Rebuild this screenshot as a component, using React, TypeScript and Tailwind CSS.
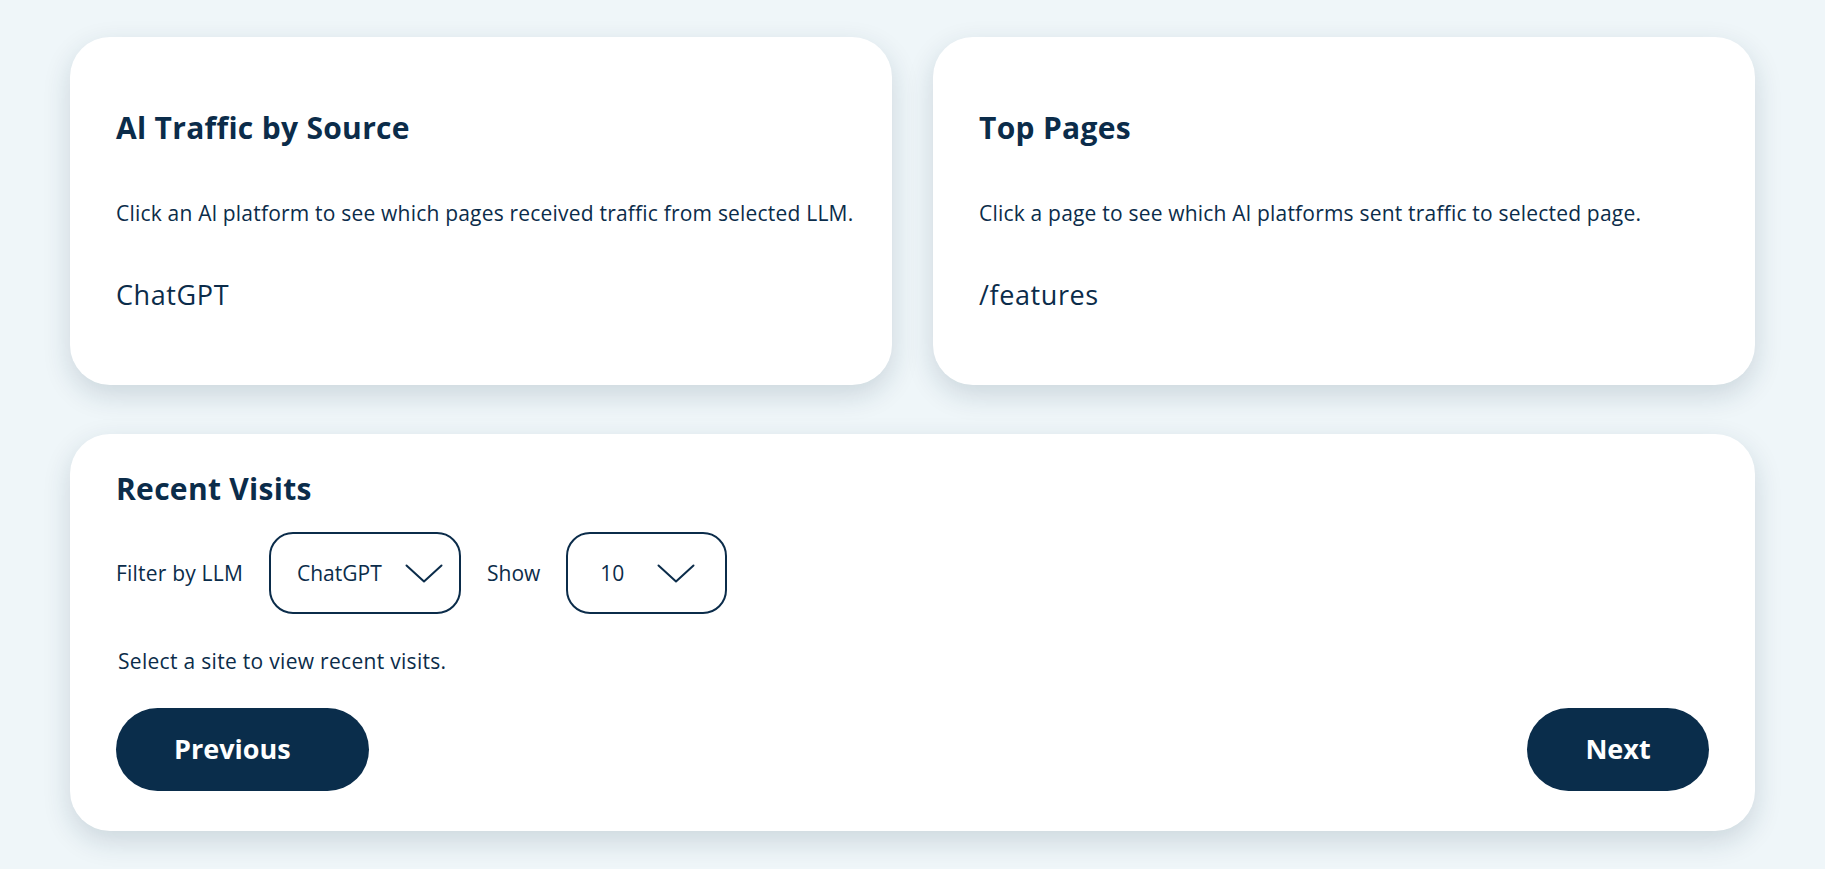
import React from "react";

function Chevron() {
  return (
    <svg width="38" height="19" viewBox="0 0 38 19" fill="none" className="shrink-0">
      <polyline points="1.5,1.5 19,17.5 36.5,1.5" stroke="#0b2c4a" strokeWidth="2" strokeLinecap="round" strokeLinejoin="round" />
    </svg>
  );
}

function TopCard({ title, desc, value }: { title: string; desc: string; value: string }) {
  return (
    <div className="flex-1 min-w-0 bg-white rounded-[40px] shadow-[0_10px_28px_rgba(20,50,75,0.16)] pl-[46px] pr-[20px] pt-[73px] pb-[74px] flex flex-col">
      <h2 className="text-[30px] leading-[36px] font-bold tracking-[0.3px]">{title}</h2>
      <p className="mt-[53px] text-[21px] leading-[28px] tracking-[0.2px] whitespace-nowrap">{desc}</p>
      <div className="mt-[52px] text-[27px] leading-[32px] tracking-[0.6px]">{value}</div>
    </div>
  );
}

export default function App() {
  return (
    <div
      className="min-h-screen w-full bg-[#eff6f9] text-[#0b2c4a] px-[70px] pt-[37px] pb-[38px]"
      style={{ fontFamily: '"Open Sans", "Noto Sans", sans-serif' }}
    >
      <div className="flex gap-[41px]">
        <TopCard
          title="Al Traffic by Source"
          desc="Click an Al platform to see which pages received traffic from selected LLM."
          value="ChatGPT"
        />
        <TopCard
          title="Top Pages"
          desc="Click a page to see which Al platforms sent traffic to selected page."
          value="/features"
        />
      </div>

      <div className="mt-[49px] bg-white rounded-[40px] shadow-[0_10px_28px_rgba(20,50,75,0.16)] px-[46px] pt-[37px] pb-[40px]">
        <h2 className="text-[30px] leading-[36px] font-bold tracking-[0.3px]">Recent Visits</h2>
        <div className="mt-[25px] flex items-center gap-[26px]">
          <span className="text-[21px] leading-[28px] tracking-[0.2px]">Filter by LLM</span>
          <div className="w-[192px] h-[82px] rounded-[24px] border-2 border-[#0b2c4a] flex items-center pl-[26px] pr-[16px]">
            <span className="text-[21px] leading-[28px]">ChatGPT</span>
            <span className="ml-auto flex">
              <Chevron />
            </span>
          </div>
          <span className="text-[21px] leading-[28px]">Show</span>
          <div className="w-[161px] h-[82px] rounded-[24px] border-2 border-[#0b2c4a] flex items-center pl-[32px] pr-[30px]">
            <span className="text-[21px] leading-[28px]">10</span>
            <span className="ml-auto flex">
              <Chevron />
            </span>
          </div>
        </div>
        <p className="mt-[33px] ml-[2px] text-[21px] leading-[28px] tracking-[0.3px]">Select a site to view recent visits.</p>
        <div className="mt-[33px] flex items-center justify-between">
          <button className="h-[83px] w-[253px] rounded-full bg-[#0a2d4b] text-white text-[27px] font-bold pl-[58px] pr-[70px] text-left">
            Previous
          </button>
          <button className="h-[83px] w-[182px] rounded-full bg-[#0a2d4b] text-white text-[27px] font-bold text-center">
            Next
          </button>
        </div>
      </div>
    </div>
  );
}
